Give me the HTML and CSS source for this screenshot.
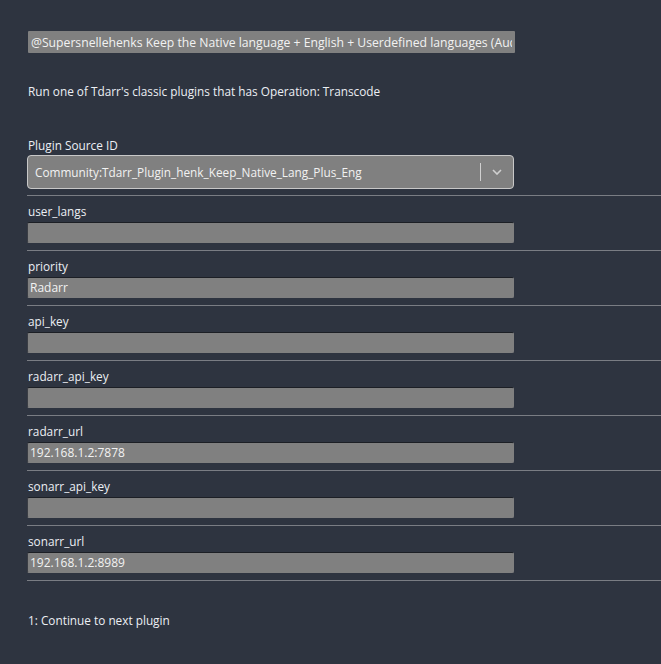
FILE: index.html
```html
<!DOCTYPE html>
<html>
<head>
<meta charset="utf-8">
<link rel="stylesheet" href="styles.css">
</head>
<body>
<div class="page">
  <input class="title-input" type="text" value="@Supersnellehenks Keep the Native language + English + Userdefined languages (Audio)">
  <p class="desc">Run one of Tdarr's classic plugins that has Operation: Transcode</p>
  <div class="source">
    <div class="label">Plugin Source ID</div>
    <div class="select">
      <span class="select-value">Community:Tdarr_Plugin_henk_Keep_Native_Lang_Plus_Eng</span>
      <span class="select-sep"></span>
      <svg class="chevron" width="10" height="6" viewBox="0 0 10 6"><path d="M1 1 L5 5 L9 1" fill="none" stroke="#d0d0d0" stroke-width="1.6"/></svg>
    </div>
  </div>
  <div class="field"><div class="label">user_langs</div><input class="input" type="text" value=""></div>
  <div class="field"><div class="label">priority</div><input class="input" type="text" value="Radarr"></div>
  <div class="field"><div class="label">api_key</div><input class="input" type="text" value=""></div>
  <div class="field"><div class="label">radarr_api_key</div><input class="input" type="text" value=""></div>
  <div class="field"><div class="label">radarr_url</div><input class="input" type="text" value="192.168.1.2:7878"></div>
  <div class="field"><div class="label">sonarr_api_key</div><input class="input" type="text" value=""></div>
  <div class="field"><div class="label">sonarr_url</div><input class="input" type="text" value="192.168.1.2:8989"></div>
  <p class="outputs">1: Continue to next plugin</p>
</div>
</body>
</html>
```
FILE: styles.css
```css
html, body {
  margin: 0;
  padding: 0;
  background: #2e3440;
}
body {
  font-family: "Open Sans", "Noto Sans", sans-serif;
  font-size: 11.8px;
  color: #eceff4;
  height: 664px;
  overflow: hidden;
}
.page {
  display: flex;
  flex-direction: column;
  padding: 31px 0 0 27px;
}
.title-input {
  box-sizing: border-box;
  width: 487px;
  height: 22px;
  margin: 0 0 0 1px;
  padding: 0 3px;
  border: none;
  border-radius: 1px;
  background: #808080;
  color: #f2f2f2;
  font-family: inherit;
  font-size: 12.2px;
  outline: none;
}
.desc {
  margin: 29px 0 0 1px;
  line-height: 18px;
}
.source {
  display: flex;
  flex-direction: column;
  margin-top: 36px;
  border-bottom: 1px solid #7a7d84;
  padding-bottom: 6px;
}
.label {
  line-height: 18px;
  height: 18px;
  margin-left: 1px;
}
.source .label {
  margin-bottom: 1px;
}
.select {
  box-sizing: border-box;
  width: 487px;
  height: 34px;
  display: flex;
  align-items: center;
  background: #808080;
  border: 1px solid #c8c8c8;
  border-radius: 4px;
  padding-left: 7px;
}
.select-value {
  flex: 1;
  color: #f2f2f2;
}
.select-sep {
  width: 1px;
  height: 18px;
  background: #d0d0d0;
}
.chevron {
  margin: 0 11px 0 11px;
}
.field {
  display: flex;
  flex-direction: column;
  padding-top: 6px;
  padding-bottom: 7px;
  border-bottom: 1px solid #7a7d84;
}
.field .label {
  margin-bottom: 2px;
}
.input {
  box-sizing: border-box;
  width: 487px;
  height: 21px;
  margin: 0;
  padding: 0 2px;
  background: #808080;
  border: 1px solid #808080;
  border-top-color: #1c1f25;
  border-left-color: #3a3d44;
  border-radius: 2px;
  color: #f2f2f2;
  font-family: inherit;
  font-size: 12px;
  outline: none;
}
.outputs {
  margin: 30px 0 0 1px;
  line-height: 18px;
}
```
